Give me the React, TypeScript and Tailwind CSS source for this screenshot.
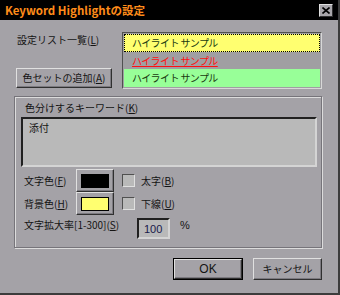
import React from 'react'

const FONT = { fontFamily: '"Noto Sans CJK JP", "Liberation Sans", sans-serif' }

function Raised({ className = '', children }: { className?: string; children?: React.ReactNode }) {
  return (
    <div
      className={`flex items-center justify-center border border-t-[#e0e0e0] border-l-[#e0e0e0] border-r-[#303030] border-b-[#303030] shadow-[inset_-1px_-1px_0_#7c7a80] ${className}`}
    >
      {children}
    </div>
  )
}

function Check() {
  return (
    <div className="w-[13px] h-[13px] bg-[#b9b9b9] border border-t-[#505050] border-l-[#505050] border-r-[#e0e0e0] border-b-[#e0e0e0]" />
  )
}

export default function App() {
  return (
    <div
      className="w-[340px] h-[295px] bg-[#a4a2a7] text-[10px] leading-[12px] text-[#141414] border-r-2 border-b-2 border-r-[#3c3c3c] border-b-[#3c3c3c] overflow-hidden"
      style={FONT}
    >
      {/* Title bar */}
      <div className="h-[20px] bg-black flex items-center pl-[5px] pr-[5px]">
        <span className="text-[#ff8c1a] font-bold text-[11.5px]">Keyword Highlightの設定</span>
        <div className="ml-auto w-[14px] h-[13px] bg-[#a8a6aa] border border-t-[#e0e0e0] border-l-[#e0e0e0] border-r-[#303030] border-b-[#303030] flex items-center justify-center">
          <svg width="8" height="7" viewBox="0 0 8 7">
            <path d="M0.5 0.5 L7.5 6.5 M7.5 0.5 L0.5 6.5" stroke="#000" strokeWidth="1.6" />
          </svg>
        </div>
      </div>

      {/* List row */}
      <div className="flex mt-[12px]">
        <div className="w-[122px] pl-[16px] flex flex-col">
          <div className="pl-[1px] pt-[2px]">設定リスト一覧(<span className="underline">L</span>)</div>
          <Raised className="mt-[22px] w-[96px] h-[20px]">
            <span>色セットの追加(<span className="underline">A</span>)</span>
          </Raised>
        </div>
        <div className="w-[200px] h-[57px] bg-[#a09fa2] border border-t-[#505050] border-l-[#505050] border-r-[#d8d8d8] border-b-[#d8d8d8] p-[1px] flex flex-col tracking-[-0.6px]">
          <div className="h-[18px] bg-[#ffff70] border border-dotted border-black flex items-center pl-[7px] text-[#1a3a10]">
            ハイライト サンプル
          </div>
          <div className="h-[17px] flex items-center pl-[8px] text-[#ff1010] underline decoration-[#ff1010]">
            ハイライト サンプル
          </div>
          <div className="h-[18px] bg-[#98ff98] flex items-center pl-[8px] text-[#1a3a10]">
            ハイライト サンプル
          </div>
        </div>
      </div>

      {/* Group box */}
      <div className="ml-[14px] mt-[7px] w-[308px] h-[152px] border border-[#76747a] shadow-[inset_1px_1px_0_#dcdcdc,1px_1px_0_#dcdcdc] flex flex-col">
        <div className="pl-[10px] pt-[5px] h-[20px]">色分けするキーワード(<span className="underline">K</span>)</div>
        <div className="ml-[6px] w-[296px] h-[50px] bg-[#b9b9b9] border-2 border-t-[#202020] border-l-[#202020] border-r-[#d4d4d4] border-b-[#d4d4d4] pl-[6px] pt-[3px]">
          添付
        </div>
        <div className="flex items-center mt-[2px] h-[23px]">
          <div className="w-[61px] pl-[9px]">文字色(<span className="underline">F</span>)</div>
          <Raised className="w-[38px] h-[23px]">
            <div className="w-[28px] h-[14px] bg-black border border-black" />
          </Raised>
          <div className="ml-[8px]">
            <Check />
          </div>
          <div className="ml-[6px]">太字(<span className="underline">B</span>)</div>
        </div>
        <div className="flex items-center h-[23px]">
          <div className="w-[61px] pl-[9px]">背景色(<span className="underline">H</span>)</div>
          <Raised className="w-[38px] h-[23px]">
            <div className="w-[28px] h-[14px] bg-[#ffff70] border border-black" />
          </Raised>
          <div className="ml-[8px]">
            <Check />
          </div>
          <div className="ml-[6px]">下線(<span className="underline">U</span>)</div>
        </div>
        <div className="flex items-start mt-[3px]">
          <div className="w-[122px] pl-[9px] pt-[1px]">文字拡大率[1-300](<span className="underline">S</span>)</div>
          <div className="w-[33px] h-[21px] bg-[#b9b9b9] border-2 border-t-[#202020] border-l-[#202020] border-r-[#d4d4d4] border-b-[#d4d4d4] flex items-center pl-[5px] text-[11px] text-[#18184a]" style={{ fontFamily: '"Liberation Sans", sans-serif' }}>
            100
          </div>
          <div className="ml-[10px] pt-[1px] text-[11px]" style={{ fontFamily: '"Liberation Sans", sans-serif' }}>%</div>
        </div>
      </div>

      {/* Buttons */}
      <div className="flex mt-[10px] ml-[173px]">
        <div className="w-[70px] h-[22px] border border-black">
          <Raised className="w-full h-full">
            <span style={{ fontFamily: '"Liberation Sans", sans-serif' }} className="text-[12px]">OK</span>
          </Raised>
        </div>
        <Raised className="ml-[10px] w-[69px] h-[22px]">キャンセル</Raised>
      </div>
    </div>
  )
}
